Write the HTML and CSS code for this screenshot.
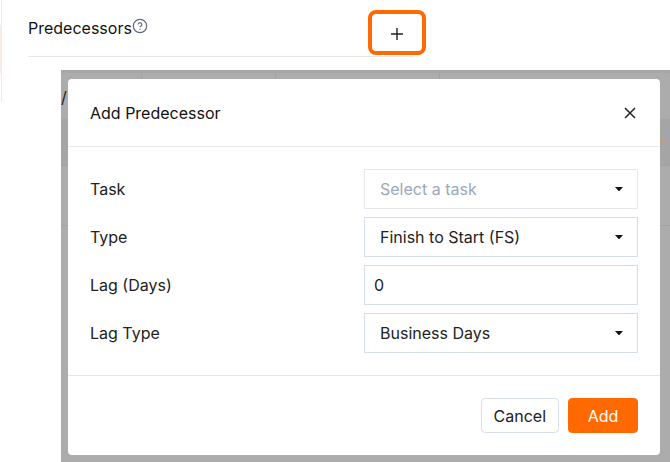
FILE: index.html
```html
<!DOCTYPE html>
<html lang="en">
<head>
<meta charset="utf-8">
<meta name="viewport" content="width=device-width, initial-scale=1">
<title>Add Predecessor</title>
<link rel="stylesheet" href="styles.css">
</head>
<body>
<div class="page">
  <div class="rail" aria-hidden="true"><div class="rail-active"></div></div>
  <header class="section">
    <h1 class="section-title">Predecessors</h1>
    <svg class="help" viewBox="0 0 16 16" role="img" aria-label="Help">
      <circle cx="8" cy="8" r="6.7"/>
      <path d="M6.2 6.5a1.8 1.8 0 1 1 2.8 1.5c-.7.4-1 .7-1 1.3"/>
      <path d="M8 10.7v1.1"/>
    </svg>
    <button class="add-row" type="button" aria-label="Add predecessor">
      <svg viewBox="0 0 12 12"><path d="M6 0v12M0 6h12"/></svg>
    </button>
  </header>
  <main class="backdrop">
    <div class="grid-behind" aria-hidden="true">
      <div class="grid-head"><span>/</span><span></span><span></span><span></span></div>
      <div class="grid-row grid-row-selected"><i></i></div>
      <div class="grid-row"></div>
    </div>
    <form class="dialog" role="dialog" aria-labelledby="dialog-title">
      <div class="dialog-head">
        <h2 class="dialog-title" id="dialog-title">Add Predecessor</h2>
        <button class="close" type="button" aria-label="Close">
          <svg viewBox="0 0 12 12"><path d="M1 1l10 10M11 1L1 11"/></svg>
        </button>
      </div>
      <div class="fields">
        <div class="field">
          <label for="task">Task</label>
          <div class="select">
            <select class="control empty" id="task"><option>Select a task</option></select>
            <svg class="caret" viewBox="0 0 8 4"><path d="M0 0h8L4.6 3.7Q4 4.2 3.4 3.7z"/></svg>
          </div>
        </div>
        <div class="field">
          <label for="type">Type</label>
          <div class="select">
            <select class="control" id="type"><option>Finish to Start (FS)</option></select>
            <svg class="caret" viewBox="0 0 8 4"><path d="M0 0h8L4.6 3.7Q4 4.2 3.4 3.7z"/></svg>
          </div>
        </div>
        <div class="field">
          <label for="lag">Lag (Days)</label>
          <input class="control" id="lag" type="text" inputmode="numeric" value="0">
        </div>
        <div class="field">
          <label for="lag-type">Lag Type</label>
          <div class="select">
            <select class="control" id="lag-type"><option>Business Days</option></select>
            <svg class="caret" viewBox="0 0 8 4"><path d="M0 0h8L4.6 3.7Q4 4.2 3.4 3.7z"/></svg>
          </div>
        </div>
      </div>
      <div class="dialog-foot">
        <button class="button" type="button">Cancel</button>
        <button class="button primary" type="submit">Add</button>
      </div>
    </form>
  </main>
</div>
</body>
</html>
```
FILE: styles.css
```css
* {
  box-sizing: border-box;
}

body {
  margin: 0;
  background: #fff;
  color: #222;
  font: 400 16px/24px Inter, "Liberation Sans", sans-serif;
}

button,
input,
select {
  font: inherit;
  color: inherit;
}

svg {
  display: block;
  fill: none;
  stroke: currentColor;
}

.page {
  display: flex;
  flex-direction: column;
  min-height: 100vh;
  position: relative;
}

/* Edge of the side navigation */
.rail {
  position: absolute;
  top: 0;
  left: 0;
  width: 2px;
  height: 102px;
  padding-top: 25px;
  border-right: 1px solid #e8ebf1;
}

.rail-active {
  width: 2px;
  height: 48px;
  background: #f8ebe5;
}

/* Section header */
.section {
  display: flex;
  align-items: center;
  width: calc(58% - 4px);
  height: 57px;
  margin-left: 28px;
  border-bottom: 1px solid #e3e8f0;
}

.section-title,
.dialog-title {
  margin: 0;
  color: #111;
  font-size: 16px;
  font-weight: 400;
}

.help {
  width: 16px;
  height: 16px;
  margin: 0 auto 4px 0;
  color: #666b7c;
  stroke-width: 1.2;
}

.add-row {
  display: grid;
  place-items: center;
  width: 58px;
  height: 45px;
  margin: 8px -13px 0 0;
  padding: 3px 0 0;
  border: 4px solid #ff6900;
  border-radius: 8px;
  background: #fff;
}

.add-row svg {
  width: 12px;
  height: 12px;
  stroke-width: 1.4;
}

/* Dimmed table under the dialog */
.backdrop {
  position: relative;
  flex: 1;
  margin: 13px 0 0 61px;
  padding: 9px 10px 7px 7px;
  background: #acacac;
}

.grid-behind {
  position: absolute;
  inset: 0;
  overflow: hidden;
  border-top: 3px solid #a3a5a7;
}

.grid-head {
  display: grid;
  grid-template-columns: 81px 134px 164px 1fr;
  height: 46px;
}

.grid-head span {
  padding-top: 12px;
  border-right: 1px solid #9da3a9;
}

.grid-head span:last-child {
  border-right: 0;
}

.grid-row {
  height: 60px;
  border-bottom: 1px solid #a0a2a6;
}

.grid-row-selected {
  display: flex;
  justify-content: flex-end;
  height: 47px;
  padding: 21px 7px 0 0;
  background: #a5a5a5;
}

.grid-row-selected i {
  width: 3px;
  height: 4px;
  background: #c09b7c;
}

/* Dialog */
.dialog {
  position: relative;
  border-radius: 4px;
  background: #fff;
}

.dialog-head {
  display: flex;
  align-items: center;
  justify-content: space-between;
  height: 68px;
  padding: 0 22px;
  border-bottom: 1px solid #e6e8eb;
}

.close {
  display: grid;
  place-items: center;
  width: 16px;
  height: 16px;
  padding: 0;
  border: 0;
  background: none;
}

.close svg {
  width: 12px;
  height: 12px;
  stroke-width: 1.5;
}

.fields {
  display: grid;
  gap: 8px;
  padding: 22px;
}

.field {
  display: grid;
  grid-template-columns: 1fr 1fr;
  align-items: center;
}

.select {
  position: relative;
}

.control {
  display: block;
  width: 100%;
  height: 40px;
  padding: 0 9px;
  border: 1px solid #d5dde9;
  border-radius: 0;
  background: #fff;
  appearance: none;
}

.select .control {
  padding: 0 32px 0 15px;
}

.select .empty {
  border-color: #e3e7ef;
  color: #9aa8bb;
}

.caret {
  position: absolute;
  top: 18px;
  right: 15px;
  width: 8px;
  height: 4px;
  fill: #111;
  stroke: none;
  pointer-events: none;
}

.dialog-foot {
  display: flex;
  justify-content: flex-end;
  gap: 9px;
  padding: 22px;
  border-top: 1px solid #e6e6e6;
}

.button {
  min-width: 70px;
  height: 35px;
  padding: 0 12px;
  border: 1px solid #d8dfea;
  border-radius: 4px;
  background: #fff;
}

.primary {
  border-color: #ff6900;
  background: #ff6900;
  color: #fff;
}
```
